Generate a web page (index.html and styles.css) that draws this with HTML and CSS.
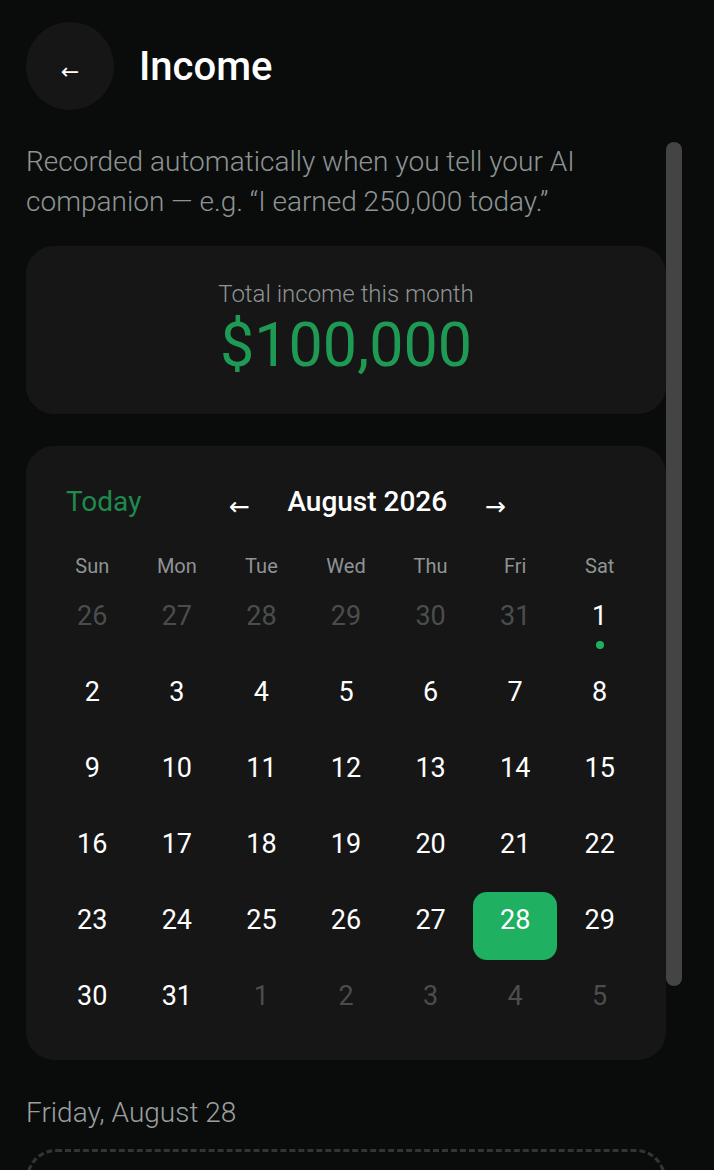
FILE: index.html
```html
<!DOCTYPE html>
<html lang="en">
<head>
<meta charset="utf-8">
<title>Income</title>
<link rel="stylesheet" href="styles.css">
</head>
<body>
<div class="screen">
  <header class="topbar">
    <button class="back-btn" aria-label="Back">←</button>
    <h1 class="title">Income</h1>
  </header>

  <main class="content">
    <p class="intro">Recorded automatically when you tell your AI companion — e.g. “I earned 250,000 today.”</p>

    <section class="card total-card">
      <div class="total-label">Total income this month</div>
      <div class="total-amount">$100,000</div>
    </section>

    <section class="card calendar">
      <div class="cal-head">
        <button class="today-btn">Today</button>
        <div class="month-nav">
          <button class="nav-btn" aria-label="Previous month">←</button>
          <span class="month-name">August 2026</span>
          <button class="nav-btn" aria-label="Next month">→</button>
        </div>
      </div>
      <div class="weekdays">
        <span>Sun</span><span>Mon</span><span>Tue</span><span>Wed</span><span>Thu</span><span>Fri</span><span>Sat</span>
      </div>
      <div class="days">
        <div class="day muted"><span class="num">26</span></div>
        <div class="day muted"><span class="num">27</span></div>
        <div class="day muted"><span class="num">28</span></div>
        <div class="day muted"><span class="num">29</span></div>
        <div class="day muted"><span class="num">30</span></div>
        <div class="day muted"><span class="num">31</span></div>
        <div class="day"><span class="num">1</span><span class="dot"></span></div>

        <div class="day"><span class="num">2</span></div>
        <div class="day"><span class="num">3</span></div>
        <div class="day"><span class="num">4</span></div>
        <div class="day"><span class="num">5</span></div>
        <div class="day"><span class="num">6</span></div>
        <div class="day"><span class="num">7</span></div>
        <div class="day"><span class="num">8</span></div>

        <div class="day"><span class="num">9</span></div>
        <div class="day"><span class="num">10</span></div>
        <div class="day"><span class="num">11</span></div>
        <div class="day"><span class="num">12</span></div>
        <div class="day"><span class="num">13</span></div>
        <div class="day"><span class="num">14</span></div>
        <div class="day"><span class="num">15</span></div>

        <div class="day"><span class="num">16</span></div>
        <div class="day"><span class="num">17</span></div>
        <div class="day"><span class="num">18</span></div>
        <div class="day"><span class="num">19</span></div>
        <div class="day"><span class="num">20</span></div>
        <div class="day"><span class="num">21</span></div>
        <div class="day"><span class="num">22</span></div>

        <div class="day"><span class="num">23</span></div>
        <div class="day"><span class="num">24</span></div>
        <div class="day"><span class="num">25</span></div>
        <div class="day"><span class="num">26</span></div>
        <div class="day"><span class="num">27</span></div>
        <div class="day selected"><span class="num">28</span></div>
        <div class="day"><span class="num">29</span></div>

        <div class="day"><span class="num">30</span></div>
        <div class="day"><span class="num">31</span></div>
        <div class="day muted"><span class="num">1</span></div>
        <div class="day muted"><span class="num">2</span></div>
        <div class="day muted"><span class="num">3</span></div>
        <div class="day muted"><span class="num">4</span></div>
        <div class="day muted"><span class="num">5</span></div>
      </div>
    </section>

    <h2 class="day-title">Friday, August 28</h2>
    <div class="empty-box"></div>
  </main>

  <div class="scroll-thumb" aria-hidden="true"></div>
</div>
</body>
</html>
```

FILE: styles.css
```css
html, body {
  margin: 0;
  padding: 0;
  height: 100%;
  overflow: hidden;
  background: #0a0c0c;
}

body {
  font-family: Roboto, "Noto Sans", "Liberation Sans", sans-serif;
  color: #ffffff;
}

button {
  font-family: inherit;
  background: none;
  border: 0;
  padding: 0;
  color: inherit;
  cursor: pointer;
}

.screen {
  position: relative;
  width: 714px;
  height: 1170px;
  overflow: hidden;
}

.topbar {
  display: flex;
  align-items: center;
  gap: 25px;
  padding: 22px 0 0 26px;
  height: 88px;
}

.back-btn {
  width: 88px;
  height: 88px;
  border-radius: 50%;
  background: #161616;
  color: #ffffff;
  font-family: "DejaVu Sans", sans-serif;
  font-size: 22px;
  padding-top: 12px;
  box-sizing: border-box;
  line-height: 76px;
}

.title {
  margin: 2px 0 0;
  font-size: 40px;
  font-weight: 500;
  line-height: 48px;
}

.content {
  padding: 32px 48px 0 26px;
}

.intro {
  margin: 0 0 24px;
  font-size: 28px;
  font-weight: 300;
  line-height: 40px;
  color: #8e9494;
}

.card {
  background: #161616;
  border-radius: 28px;
}

.total-card {
  padding: 35px 24px 33px;
  text-align: center;
}

.total-label {
  font-size: 24px;
  font-weight: 300;
  line-height: 26px;
  color: #8e9494;
}

.total-amount {
  margin-top: 2px;
  font-size: 61px;
  font-weight: 400;
  line-height: 72px;
  color: #1f9a55;
}

.calendar {
  margin-top: 32px;
  padding: 26px 24px 24px;
}

.cal-head {
  display: flex;
  align-items: center;
  height: 60px;
  margin-bottom: 18px;
}

.today-btn {
  padding: 0 16px;
  font-size: 28px;
  font-weight: 400;
  line-height: 60px;
  color: #1e8a4d;
}

.month-nav {
  display: flex;
  align-items: center;
  margin-left: 58px;
}

.nav-btn {
  width: 48px;
  font-family: "DejaVu Sans", sans-serif;
  font-size: 25px;
  line-height: 60px;
  padding-top: 10px;
  color: #ffffff;
}

.month-name {
  margin: 0 24px;
  font-size: 28px;
  font-weight: 500;
  line-height: 60px;
}

.weekdays {
  display: grid;
  grid-template-columns: repeat(7, 1fr);
  height: 30px;
  margin-bottom: 8px;
  text-align: center;
  font-size: 20px;
  line-height: 32px;
  color: #8e9494;
}

.days {
  display: grid;
  grid-template-columns: repeat(7, 1fr);
  grid-auto-rows: 68px;
  row-gap: 8px;
}

.day {
  display: flex;
  flex-direction: column;
  align-items: center;
  padding-top: 13px;
  box-sizing: border-box;
  border-radius: 14px;
}

.num {
  font-size: 27px;
  line-height: 30px;
  color: #ffffff;
}

.day.muted .num {
  color: #4a4d4d;
}

.day.selected {
  background: #20b062;
}

.dot {
  width: 8px;
  height: 8px;
  margin-top: 10px;
  border-radius: 50%;
  background: #20b062;
}

.day-title {
  margin: 38px 0 0;
  font-size: 28px;
  font-weight: 300;
  line-height: 30px;
  color: #9aa0a0;
}

.empty-box {
  margin-top: 21px;
  height: 160px;
  border: 3px dashed #333535;
  border-radius: 30px;
}

.scroll-thumb {
  position: absolute;
  left: 666px;
  top: 142px;
  width: 16px;
  height: 844px;
  border-radius: 8px;
  background: #444444;
}
```
